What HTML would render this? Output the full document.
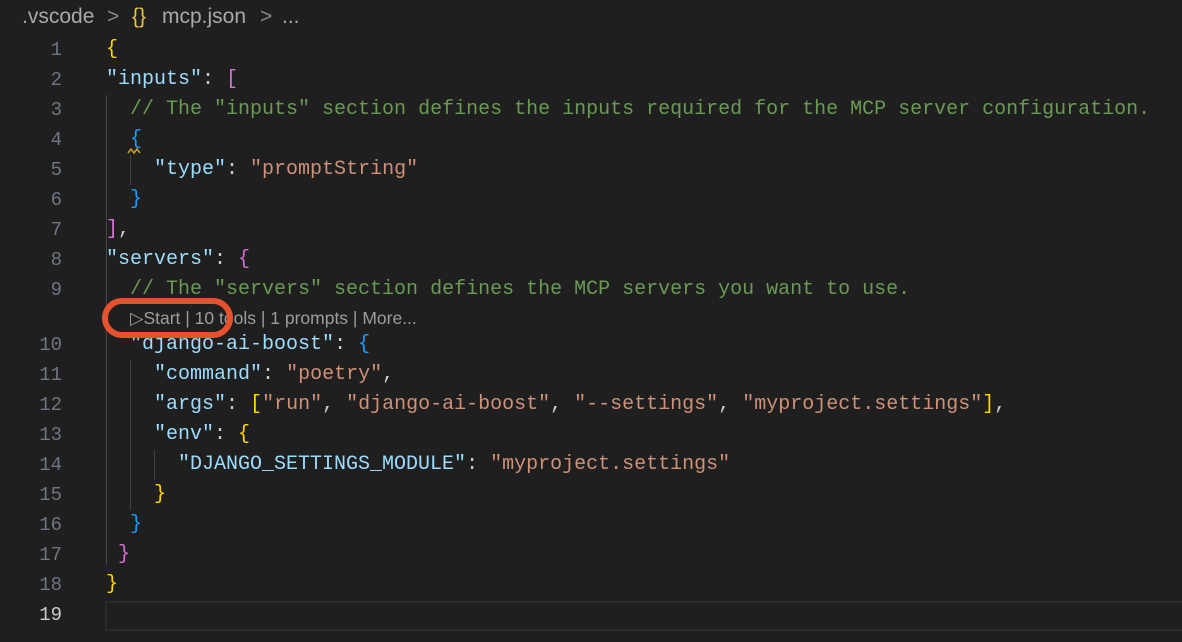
<!DOCTYPE html>
<html><head><meta charset="utf-8"><style>
html,body{margin:0;padding:0;background:#1f1f1f;width:1182px;height:642px;overflow:hidden;position:relative}
.bc{position:absolute;top:4px;font:21px "Liberation Sans",sans-serif;color:#a9a9a9;white-space:pre;line-height:26px}
.ln{position:absolute;left:0;width:62px;text-align:right;font:19px "Liberation Mono",monospace;color:#6e7681;line-height:30px}
.c{position:absolute;left:106px;font:20px "Liberation Mono",monospace;color:#cccccc;white-space:pre;line-height:30px}
.k{color:#9cdcfe}.s{color:#ce9178}.m{color:#6a9955}.y{color:#ffd700}.p{color:#da70d6}.b{color:#179fff}
.g{position:absolute;width:1px;background:#404040}
</style></head><body>
<div class="bc" style="left:22px">.vscode</div>
<div class="bc" style="left:107px;color:#888">&gt;</div>
<div class="bc" style="left:132px;color:#e8c547">{}</div>
<div class="bc" style="left:162px">mcp.json</div>
<div class="bc" style="left:260px;color:#888">&gt;</div>
<div class="bc" style="left:282px">...</div>

<div style="position:absolute;left:105px;top:601px;width:1077px;height:26px;border:2px solid #2b2b2b;border-right:none"></div>

<div class="g" style="left:106px;top:95px;height:470px;background:#474747"></div>
<div class="g" style="left:130px;top:155px;height:30px"></div>
<div class="g" style="left:130px;top:360px;height:150px"></div>
<div class="g" style="left:154px;top:450px;height:30px"></div>

<div class="ln" style="top:35px">1</div>
<div class="ln" style="top:65px">2</div>
<div class="ln" style="top:95px">3</div>
<div class="ln" style="top:125px">4</div>
<div class="ln" style="top:155px">5</div>
<div class="ln" style="top:185px">6</div>
<div class="ln" style="top:215px">7</div>
<div class="ln" style="top:245px">8</div>
<div class="ln" style="top:275px">9</div>
<div class="ln" style="top:330px">10</div>
<div class="ln" style="top:360px">11</div>
<div class="ln" style="top:390px">12</div>
<div class="ln" style="top:420px">13</div>
<div class="ln" style="top:450px">14</div>
<div class="ln" style="top:480px">15</div>
<div class="ln" style="top:510px">16</div>
<div class="ln" style="top:540px">17</div>
<div class="ln" style="top:570px">18</div>
<div class="ln" style="top:600px;color:#cccccc">19</div>

<div class="c" style="top:35px"><span class="y">{</span></div>
<div class="c" style="top:65px"><span class="k">"inputs"</span>: <span class="p">[</span></div>
<div class="c" style="top:95px">  <span class="m">// The "inputs" section defines the inputs required for the MCP server configuration.</span></div>
<div class="c" style="top:125px">  <span class="b">{</span></div>
<svg style="position:absolute;left:127px;top:148px" width="14" height="6"><path d="M1 5 L4 1 L7 5 L10 1 L13 5" stroke="#c9a026" stroke-width="1.5" fill="none"/></svg>
<div class="c" style="top:155px">    <span class="k">"type"</span>: <span class="s">"promptString"</span></div>
<div class="c" style="top:185px">  <span class="b">}</span></div>
<div class="c" style="top:215px"><span class="p">]</span>,</div>
<div class="c" style="top:245px"><span class="k">"servers"</span>: <span class="p">{</span></div>
<div class="c" style="top:275px">  <span class="m">// The "servers" section defines the MCP servers you want to use.</span></div>
<div class="c" style="top:330px">  <span class="k">"django-ai-boost"</span>: <span class="b">{</span></div>
<div style="position:absolute;left:130px;top:306px;font:17.5px 'Liberation Sans',sans-serif;color:#9d9d9d;white-space:pre;line-height:24px">▷Start | 10 tools | 1 prompts | More...</div>
<div style="position:absolute;left:102px;top:298px;width:119px;height:28px;border:6px solid #e8512e;border-radius:20px"></div>
<div class="c" style="top:360px">    <span class="k">"command"</span>: <span class="s">"poetry"</span>,</div>
<div class="c" style="top:390px">    <span class="k">"args"</span>: <span class="y">[</span><span class="s">"run"</span>, <span class="s">"django-ai-boost"</span>, <span class="s">"--settings"</span>, <span class="s">"myproject.settings"</span><span class="y">]</span>,</div>
<div class="c" style="top:420px">    <span class="k">"env"</span>: <span class="y">{</span></div>
<div class="c" style="top:450px">      <span class="k">"DJANGO_SETTINGS_MODULE"</span>: <span class="s">"myproject.settings"</span></div>
<div class="c" style="top:480px">    <span class="y">}</span></div>
<div class="c" style="top:510px">  <span class="b">}</span></div>
<div class="c" style="top:540px"> <span class="p">}</span></div>
<div class="c" style="top:570px"><span class="y">}</span></div>
</body></html>
